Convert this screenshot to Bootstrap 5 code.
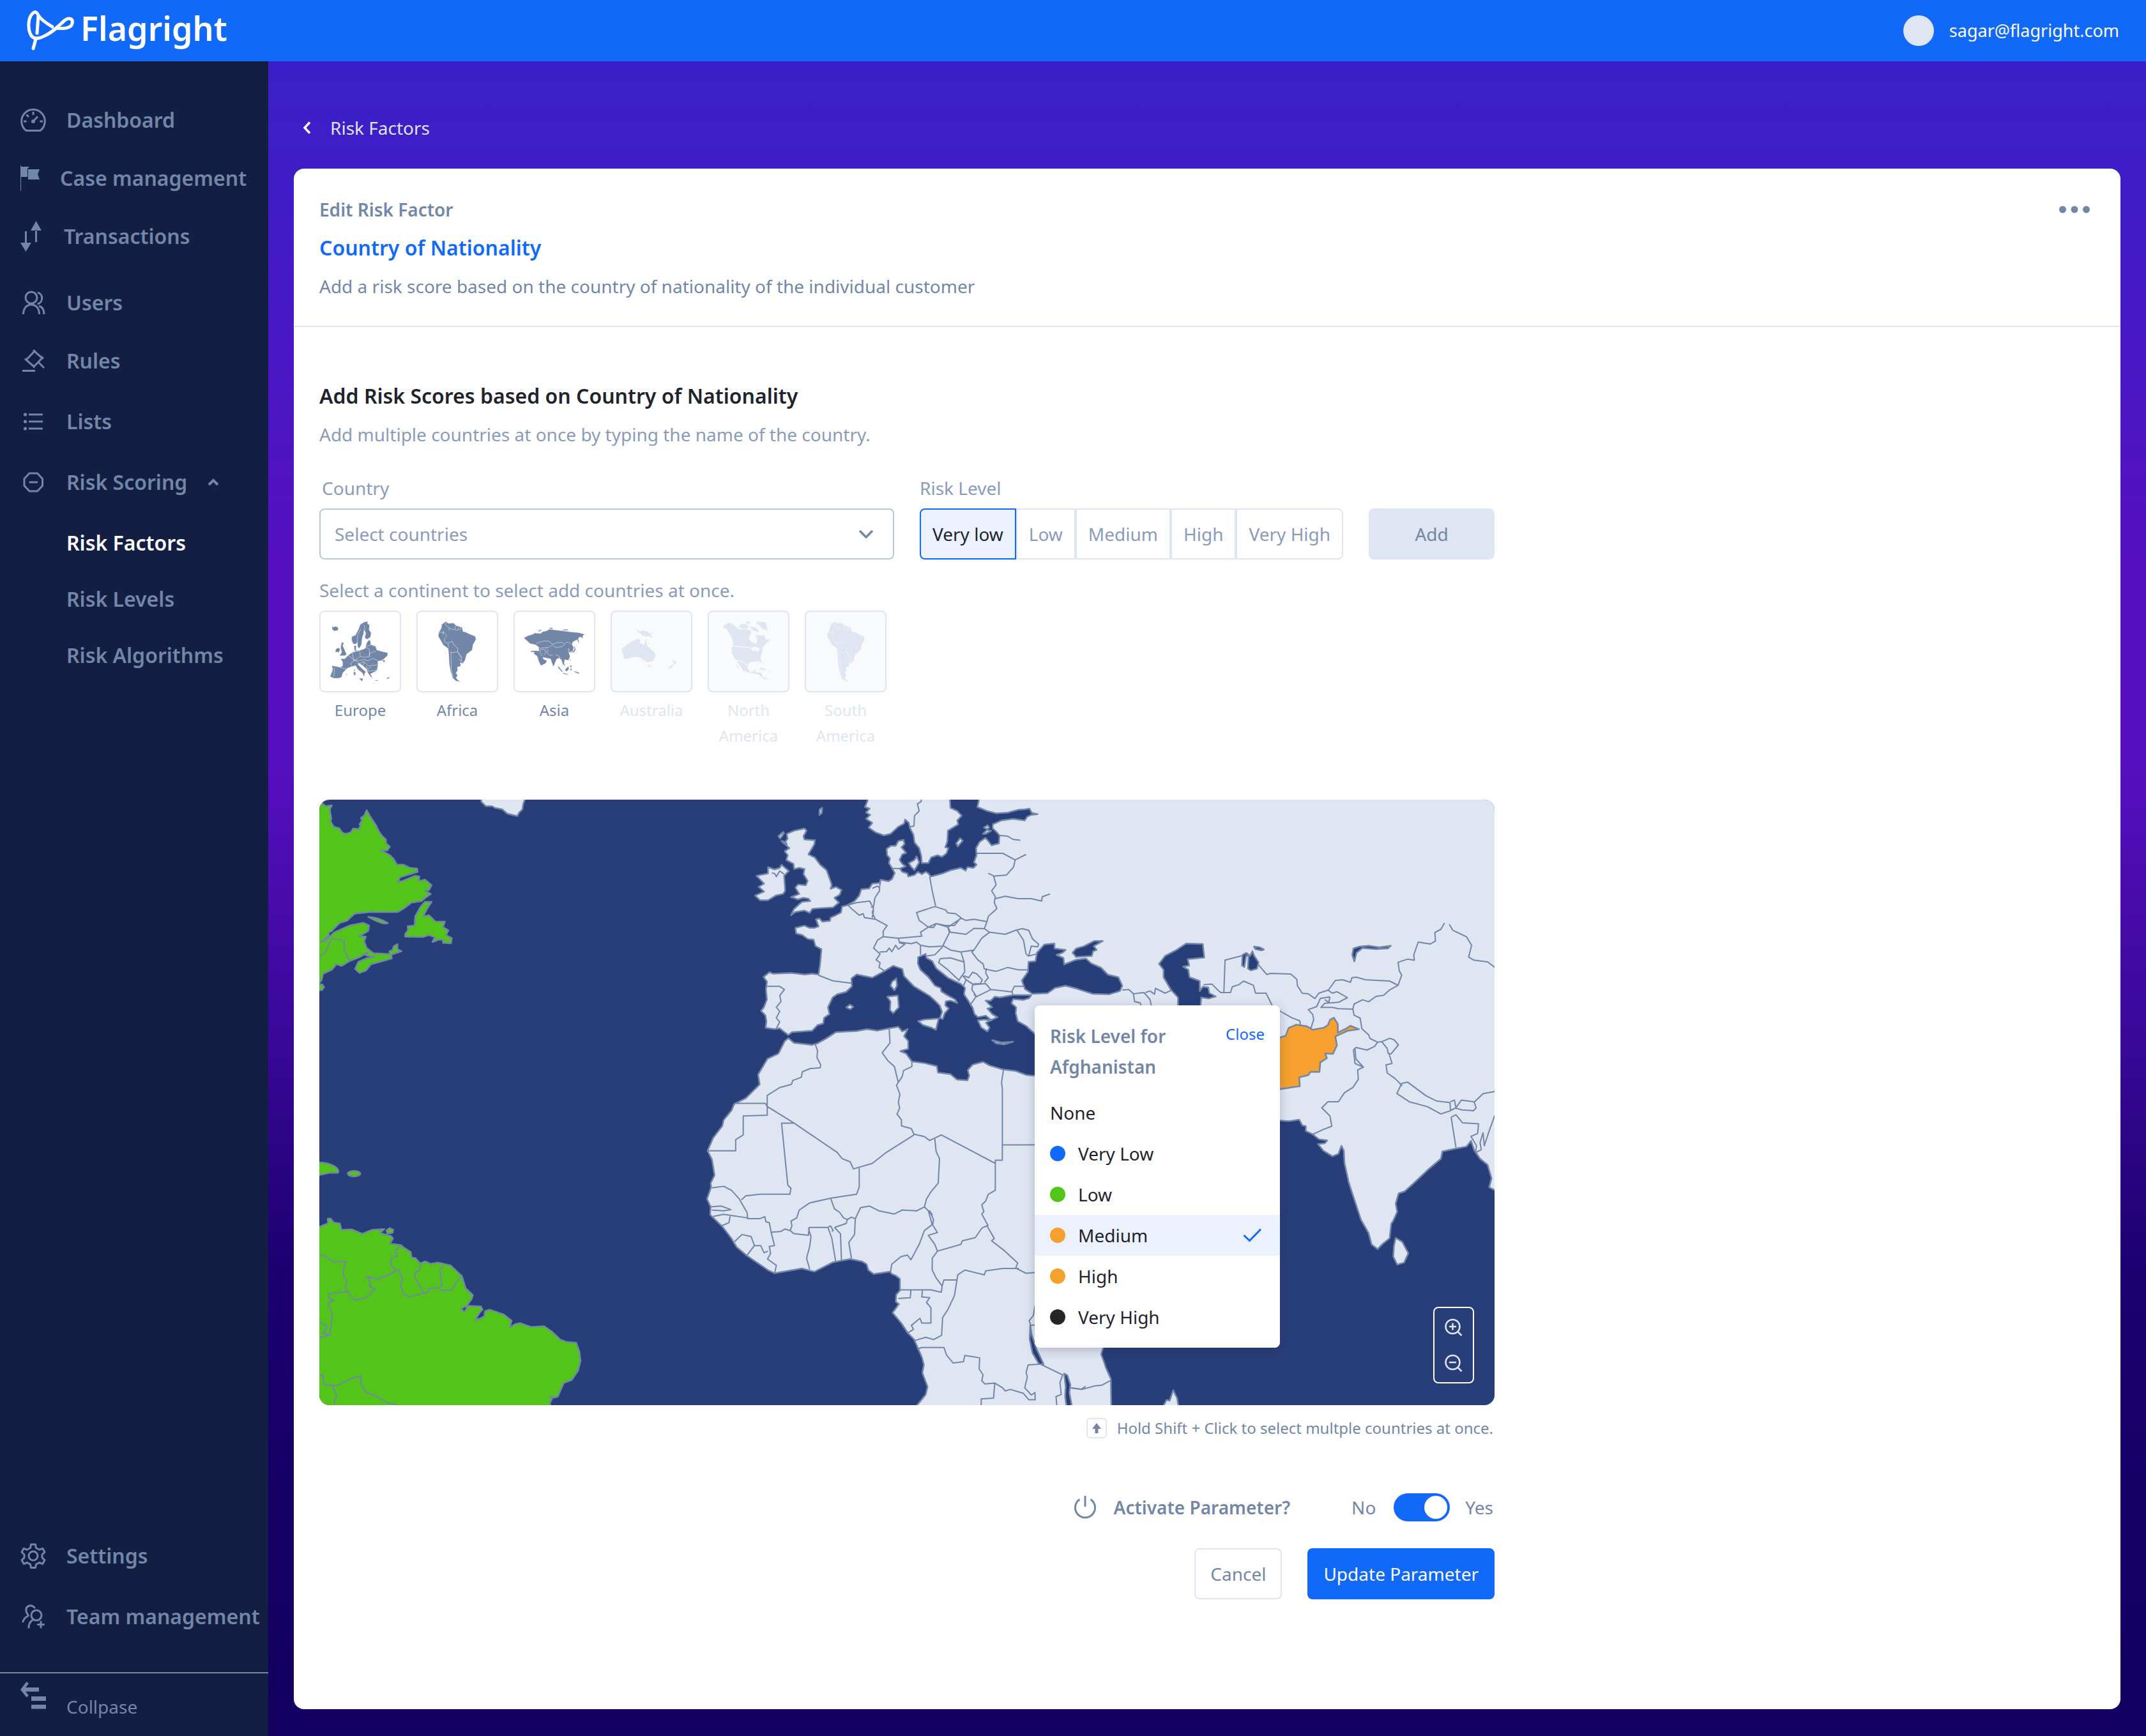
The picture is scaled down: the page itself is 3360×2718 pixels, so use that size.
<!DOCTYPE html>
<html lang="en">
<head>
<meta charset="utf-8">
<meta name="viewport" content="width=device-width, initial-scale=1">
<title>Flagright – Risk Factors</title>
<link href="https://cdn.jsdelivr.net/npm/bootstrap@5.3.0/dist/css/bootstrap.min.css" rel="stylesheet">
<style>
:root{--slate:#7286a8;--slate-soft:#8a9bba;--line:#dfe5f1;--brand:#1169f9;--ink:#1f232c;--navy:#131f42;--sea:#283e79}
body{font-family:"Noto Sans",sans-serif;font-size:28px;line-height:48px;color:var(--slate)}
a{text-decoration:none;color:inherit}
button{font-family:inherit}
.fw-semi{font-weight:600}
.topbar{height:96px;background:var(--brand);padding:0 42px}
.brand-name{font-size:52px;font-weight:600;line-height:80px;padding-bottom:8px;color:#fff}
.avatar{width:48px;height:48px;background:var(--line)}
.mail{font-size:27px}
.sidebar{width:420px;background:var(--navy);padding-top:68px;flex:none}
.side-item{display:flex;align-items:center;gap:32px;padding-left:32px;height:48px;font-size:32px;font-weight:600;color:var(--slate);white-space:nowrap}
.side-item svg,.collapse-row svg{flex:none}
.side-sub{padding-left:104px}
.side-item.current{color:#fff}
.gap-s{margin-bottom:40px}.gap-m{margin-bottom:43px}.gap-l{margin-bottom:47px}.gap-xl{margin-bottom:56px}
.collapse-row{display:flex;align-items:flex-start;gap:32px;width:100%;padding:12px 32px 22px;border:0;border-top:2px solid #76899b;background:none;color:var(--slate);text-align:left}
.collapse-row span{margin-top:16px}
.side-end{margin-bottom:63px}
.stage{padding:80px 40px 42px;background:linear-gradient(180deg,#3a20c8 0%,#421cc6 10%,#5510c0 30%,#550fbf 42%,#3a0899 58%,#1c0070 72%,#150066 85%,#130062 100%)}
.back{gap:30px;padding-left:14px;margin-bottom:40px;color:var(--line)}
.panel{border:0;border-radius:16px;background:#fff}
.panel-head{padding:40px 44px 38px 40px;border-bottom:2px solid var(--line)}
.stack{display:flex;flex-direction:column;gap:12px}
.stack>*{margin:0}
.t-large{font-size:32px;line-height:48px}
.blue{color:var(--brand)}
.dark{color:var(--ink)}
.panel-body{padding:84px 40px}
.work{max-width:1840px}
.soft{color:var(--slate-soft)}
.form-line{gap:40px;margin-top:36px}
.form-line label.cap,.form-line legend{display:block;margin:0 0 8px;font-size:28px;line-height:48px;color:var(--slate-soft);float:none}
.form-line label.cap{padding-left:4px}
.pick{height:80px;padding:0 64px 0 22px;border:2px solid #b9c5da;border-radius:8px;font-size:28px;color:var(--slate-soft);background-size:24px 16px;background-position:right 30px center;background-image:url("data:image/svg+xml,%3csvg xmlns='http://www.w3.org/2000/svg' viewBox='0 0 24 16'%3e%3cpath d='M2 3l10 10L22 3' fill='none' stroke='%237286a8' stroke-width='3.4'/%3e%3c/svg%3e")}
.country-col{flex:0 1 900px}
.seg{display:flex}
.seg label{height:80px;padding:0 18px;border:2px solid var(--line);line-height:76px;color:var(--slate-soft)}
.seg label:first-of-type{border-radius:8px 0 0 8px}
.seg label:last-of-type{border-radius:0 8px 8px 0}
.seg .btn-check:checked+label{border-color:var(--brand);background:#ebf1fd;color:var(--ink)}
.big-btn{height:80px;padding:0 23px;border:2px solid var(--line);border-radius:8px;font-size:28px;line-height:48px;color:var(--slate);background:#fff}
.big-btn.add{background:var(--line)}
.big-btn.go{border-color:var(--brand);background:var(--brand);color:#fff}
.tiles{gap:24px;margin-top:8px;margin-bottom:80px}
.tile{width:128px;padding:0;border:0;background:none;text-align:center;font-size:24px;line-height:40px;color:var(--slate)}
.tile svg{display:block;width:128px;height:128px;margin-bottom:8px;border:2px solid var(--line);border-radius:8px;fill:var(--slate);stroke:#fff;stroke-width:1.5}
.tile:disabled{color:var(--line)}
.tile:disabled svg{background:#f9fafc;fill:var(--line);stroke:#f9fafc}
.map-box{border-radius:16px;overflow:hidden;background:var(--sea)}
.map-box>svg{display:block;width:100%;height:auto}
.world path,.world ellipse{vector-effect:non-scaling-stroke}
.land{fill:#dfe5f1;stroke:#7286a8;stroke-width:2.5;stroke-linejoin:round}
.low{fill:#52c41a}
.water{fill:#283e79;stroke:#7286a8;stroke-width:2.5;stroke-linejoin:round}
.edge{fill:none;stroke:#7286a8;stroke-width:2;stroke-linejoin:round}
.popup{position:absolute;left:1120px;top:322px;width:384px;padding:24px 0 16px;border-radius:8px;background:#fff;box-shadow:0 4px 16px rgba(20,40,80,.25)}
.popup-head{padding:0 24px;margin-bottom:16px}
.popup-close{border:0;padding:0;background:none;font-size:24px;line-height:42px;color:var(--brand)}
.choice{display:flex;align-items:center;gap:20px;width:100%;height:64px;padding:0 24px;border:0;background:none;color:var(--ink);text-align:left}
.choice.on{background:#ebf1fd}
.dot{width:24px;height:24px;border-radius:50%;background:var(--brand)}
.dot-low{background:#52c41a}.dot-mid{background:#f6a02d}.dot-top{background:#262626}
.zoomer{position:absolute;right:32px;bottom:34px;width:64px;height:120px;padding:2px 0;border:2px solid #fff;border-radius:8px}
.zoomer button{padding:0;border:0;background:none;height:56px;line-height:0}
.hint{gap:16px;margin-top:20px;padding-right:2px;font-size:24px;line-height:32px}
.key{width:32px;height:32px;border:2px solid var(--line);border-radius:6px}
.switch-line{margin-top:84px;margin-bottom:40px;padding-right:2px}
.power{margin-right:27px}
.toggle.form-check-input{width:88px;height:44px;margin:0 24px 0 28px;border:0;border-radius:22px;background-color:var(--brand);background-size:44px 44px;background-position:right center;background-image:url("data:image/svg+xml,%3csvg xmlns='http://www.w3.org/2000/svg' viewBox='0 0 44 44'%3e%3ccircle cx='22' cy='22' r='18' fill='%23fff'/%3e%3c/svg%3e")}
.toggle.form-check-input:not(:checked){background-color:var(--slate);background-position:left center}
</style>
<script src="https://cdn.jsdelivr.net/npm/bootstrap@5.3.0/dist/js/bootstrap.bundle.min.js"></script>
</head>
<body>
<div class="d-flex flex-column min-vh-100">
<header class="topbar d-flex align-items-center justify-content-between">
  <a href="#" class="d-flex align-items-center" aria-label="Flagright home">
    <svg width="76" height="64" viewBox="0 0 76 64" fill="none" stroke="#fff" stroke-width="5" stroke-linecap="round" stroke-linejoin="round" class="me-2"><path d="M16 36L18 8Q23 16 40 26M18 8Q15 2 12 3C1 8 1 30 7 40Q13 47 24 42C40 36 50 24 58 17C66 10 73 13 71 21C69 29 58 29 47 28M14 45L10 60"/></svg>
    <span class="brand-name">Flagright</span>
  </a>
  <a href="#" class="d-flex align-items-center gap-4 text-white mail"><span class="avatar rounded-circle"></span>sagar@flagright.com</a>
</header>
<div class="d-flex flex-grow-1">
  <nav class="sidebar d-flex flex-column" aria-label="Main">
    <a class="side-item gap-m" href="#"><svg width="40" height="36" viewBox="0 0 40 36" fill="none" stroke="currentColor" stroke-width="3"><path d="M9 34.4A18.3 18.3 0 1 1 31 34.4Z"/><path d="M20 5v5M9.500 9.500l3.500 3.500M5 20h4.500M30.500 20H35M20 20l7-7.500"/><circle cx="20" cy="20" r="1.500"/></svg>Dashboard</a>
    <a class="side-item gap-m" href="#"><svg width="30" height="40" viewBox="0 0 30 40" fill="currentColor"><path d="M0 0h1v40H0zM1 2h13l-3 3v13H1zM13 6h17l-3 8 3 8H12V6z"/></svg>Case management</a>
    <a class="side-item gap-xl" href="#"><svg width="36" height="48" viewBox="0 0 36 48" fill="currentColor"><path d="M7 16h3v18H7zM0 34h17L8.500 48zM23 14h3v19h-3zM16 15h17L24.500 0z"/></svg>Transactions</a>
    <a class="side-item gap-m" href="#"><svg width="40" height="38" viewBox="0 0 40 38" fill="none" stroke="currentColor" stroke-width="3"><circle cx="17" cy="11" r="9"/><path d="M4.500 37c0-9 5-15 12.500-15s12.500 6 12.500 15M27 3c9 2 9 16-.5 18M29 24c6 2 8 7 8 13"/></svg>Users</a>
    <a class="side-item gap-l" href="#"><svg width="40" height="36" viewBox="0 0 40 36" fill="none" stroke="currentColor" stroke-width="3"><path d="M3 33.500h20M22 3L9 16.500 21 27 34 13.500zM20 1l4 3.500M32 11l4 3.500M7 14.500l4 4M19 24.500l3 4M28 20l9 9"/></svg>Rules</a>
    <a class="side-item gap-l" href="#"><svg width="40" height="28" viewBox="0 0 40 28" fill="currentColor"><circle cx="7.500" cy="3" r="2.600"/><circle cx="7.500" cy="14" r="2.600"/><circle cx="7.500" cy="25" r="2.600"/><path d="M13 1.500h22v3H13zM13 12.500h22v3H13zM13 23.500h22v3H13z"/></svg>Lists</a>
    <a class="side-item gap-l" href="#"><svg width="40" height="32" viewBox="0 0 40 32" fill="none" stroke="currentColor" stroke-width="3"><path d="M14 2h12.500l8 8.500v11l-8 8.500H14l-8-8.500v-11zM13.500 16h13.500"/></svg>Risk Scoring<svg width="18" height="12" viewBox="0 0 18 12" fill="none" stroke="currentColor" stroke-width="4"><path d="M2 10l7-7 7 7"/></svg></a>
    <a class="side-item side-sub current gap-s" href="#" aria-current="page">Risk Factors</a>
    <a class="side-item side-sub gap-s" href="#">Risk Levels</a>
    <a class="side-item side-sub" href="#">Risk Algorithms</a>
    <a class="side-item gap-l mt-auto" href="#"><svg width="40" height="40" viewBox="0 0 40 40" fill="none" stroke="currentColor" stroke-width="3" stroke-linejoin="round"><circle cx="20" cy="20" r="7"/><path d="M16.500 2h7l1 5.500 5 2.800 5.200-2L38 14l-4 4v5l4 3.600-3.300 5.900-5.200-2-5 2.900-1 5.100h-7l-1-5.100-5-2.900-5.200 2L2 26.600 6 23v-5l-4-4 3.300-5.700 5.200 2 5-2.800z"/></svg>Settings</a>
    <a class="side-item side-end" href="#"><svg width="40" height="40" viewBox="0 0 40 40" fill="none" stroke="currentColor" stroke-width="3" stroke-linecap="round"><circle cx="25" cy="18" r="8"/><path d="M22 6C17 0 8 3 9 11c0 4 4 6 3 8-4 2-7 5-8 9M20 25c-4 2-7 6-7 12M32 28v9M27.500 32.500h9"/></svg>Team management</a>
    <button type="button" class="collapse-row"><svg width="40" height="44" viewBox="0 0 40 44" fill="currentColor"><path d="M0 13.500L9.500 1l3.500 3-5 6h21v6.500H8l5 6-3.500 3zM17 24h23v7H17zM17 37h23v6.500H17z"/></svg><span>Collpase</span></button>
  </nav>
  <main class="stage flex-grow-1 d-flex flex-column">
    <a class="back d-flex align-items-center" href="#"><svg width="13" height="20" viewBox="0 0 13 20" fill="none" stroke="#fff" stroke-width="3.500"><path d="M11 1.500L3 10l8 8.500"/></svg>Risk Factors</a>
    <section class="panel card flex-grow-1">
      <header class="panel-head d-flex justify-content-between align-items-start">
        <div class="stack">
          <p class="fw-semi">Edit Risk Factor</p>
          <h1 class="t-large fw-semi blue">Country of Nationality</h1>
          <p>Add a risk score based on the country of nationality of the individual customer</p>
        </div>
        <button type="button" class="btn p-0 border-0" aria-label="More"><svg width="56" height="48" viewBox="0 0 56 48" fill="#7286a8"><circle cx="9.500" cy="24" r="5.500"/><circle cx="28" cy="24" r="5.500"/><circle cx="46.500" cy="24" r="5.500"/></svg></button>
      </header>
      <div class="panel-body">
      <div class="work">
        <div class="stack">
          <h2 class="t-large fw-semi dark">Add Risk Scores based on Country of Nationality</h2>
          <p class="soft">Add multiple countries at once by typing the name of the country.</p>
        </div>
        <form class="form-line d-flex align-items-end">
          <div class="country-col">
            <label class="cap" for="country">Country</label>
            <select class="form-select pick" id="country"><option>Select countries</option></select>
          </div>
          <fieldset>
            <legend>Risk Level</legend>
            <div class="seg">
              <input class="btn-check" type="radio" name="lvl" id="l1" checked><label for="l1">Very low</label>
              <input class="btn-check" type="radio" name="lvl" id="l2"><label for="l2">Low</label>
              <input class="btn-check" type="radio" name="lvl" id="l3"><label for="l3">Medium</label>
              <input class="btn-check" type="radio" name="lvl" id="l4"><label for="l4">High</label>
              <input class="btn-check" type="radio" name="lvl" id="l5"><label for="l5">Very High</label>
            </div>
          </fieldset>
          <button type="button" class="big-btn add flex-grow-1">Add</button>
        </form>
        <p class="soft mb-0 mt-4">Select a continent to select add countries at once.</p>
        <div class="tiles d-flex align-items-start">
          <button type="button" class="tile"><svg viewBox="36 36 372 372"><path d="M90 100l5 8 5-2 10-2 10 8-4 12-16 2-10-8zM258 80l-2 10 10 8-2 22 10 15-4 20-15 10-12-7 5-23-8-15-2 20-6 15-2 15-2 20-10 18-8-8-2-20-8 8-12-2-6-16V152l18-7 15-30 7-20 18-11zM136 178l10 4-6 13 8 17 10 23-8 7h-25l10-17-5-20 2-15zM108 210l12-6 8 8-6 14-18-2zM192 195h12l-2 20 10 3-16 4z"/><path d="M262 168l8 4 2 18 23 8 5 17 25 7 27 6-2 14-15 13-8 9-22 4 0 24-5 20-15 8-15 8 12 20-12-8-12-17-8-20-18-15-17-12-3 7 20 20 18 15-6 5-4 20-8-20-22-17-10-18-15 5-23 7-22 23-5 20-15 5H98l-18-8 12-30-4-22 42 8 10-8-2-20-10-12h22l15-16 20-14 30-8 30-10 5-20 5-10zM215 348h20l-3 16zM190 318h10v16h-8zM193 305h5v10h-4zM155 328h6v4h-6zM292 356h15v4h-15zM344 348l19-9-6 9-8 4zM325 260l15 4-7 11z"/><path fill="none" d="M225 115l-15 30-2 40M240 98l5 20M90 298l12 4-5 38M130 298l30 8M165 240l25 18 0 10M185 228l5 30 25 18M220 220l2 25-30 22-15 10 5 18M222 245l20 5 25-5-3-35-17-8M272 192l-22 4M265 245l0-15 30-10M190 262l25 3 25-5 20 5 20-10 25 8M215 280l25-10 20 20 40-5M240 270l-5 20M250 290l10 25 40-5M258 305l15-12"/></svg>Europe</button>
          <button type="button" class="tile"><svg viewBox="492 36 372 372"><g id="south-shape"><path d="M625 80l10 10 25-2 12 12 28 8 5 20 10 2 25 12 22 8 4 15-14 25-4 25-26 20-7 27-10 16-13-3 3 15-17 6 2 16-8 10 8 13-8 10 8 10 15 10-25-5-15-15-10-35-5-30-2-40-3-32-23-16-12-22-12-20 4-20 10-15 3-20z"/><path fill="none" d="M625 82l-2 15 17 15-2 12M640 112l25 8 7-20M668 122l15-2 2-12M690 122l5-14M592 130l25 4 12 14-14 17 5 13 15 6 2 18M615 125l-5 20M635 182l20-7 5 15 20 15v20l18 20 0 25M645 225l15 2 20-4 15 28M648 225l2 80 8 40M684 258l22 16"/></g></svg>Africa</button>
          <button type="button" class="tile"><svg viewBox="948 36 372 372"><path d="M990 158l20-10 25-8 5-5 30 2 8-8 22-5 10-7 20 3 35 4 45 6 35 3 32 8-10 8 2 12-15-8-8 8 6 26-12-20-18 9-5 12 8 15-5 22-18 2 6 18-4 14-8 5-13-4-3 18 7 14-14-10-6-20-11-9-12 6-9 22-5 14-8-20-6-18-20-4-16-4 4 10 16 6-8 14-22 10-10-22-8-24-16-10 4-7-16-1-2-7 38 0 0-18-18-10-22-5zM1058 125l14-7 2 4-12 8zM1110 110h14l4 6h-14zM1172 118h26v5h-22zM1200 208l7 10-6 8zM1212 222l10-2 6-8-2-14 4 0 4 16-6 10-10 4zM1152 290l22 26-4 3-20-22zM1175 322l22 6v4l-22-5zM1185 305l14-13 4 12-10 12-8-3zM1205 252l5 12-4 4zM1208 285l8 5v6h-8zM1228 314l22 6v8l-14-6-10-4zM1208 300l10 5-8 10z"/><path fill="none" d="M1046 195l8-14 30-8 22 0 20 14-14 14-18 2-25 4-20 0M1126 188l22-8 22 0 14 8-12 10-30 6-16-10M1184 182l14-4 14 10M1095 205l10 12-8 8 14 14 16 2M1045 205l20 15 10 22M1065 215l22-4 8 14-10 14M1030 220l14 20M1140 236l18 10 4 18M1040 262l20-8"/><path fill="#fff" d="M1046 196l9 3-2 9 8 9-6 2-6-8z"/></svg>Asia</button>
          <button type="button" class="tile" disabled><svg viewBox="54 36 372 372"><path d="M98 210l32-25 30-17 14-6 12 4 2 17 17 8 8-30 8 34 24 22 15 18-2 14-12 20-28 4-14-10-12-8-18-7-26 2-16 7-20 1zM220 285h20l-9 13zM166 121l12 2 6 5 16-6 25 8 12 12 12 18-20-8-26 0-8-10-16-8zM236 138l14-4-2 5-8 3zM336 256l14 10 9 8-9 12-6-8zM338 281l7 8-20 16-10-1z"/><path fill="none" d="M207 122v30"/></svg>Australia</button>
          <button type="button" class="tile" disabled><svg viewBox="510 36 372 372"><path d="M576 118l4-20 25-13 20 10 25 23 30-2 24 6 6 14-12 24 14 20 20 5 4-16-8-26 20 2 22 1 8 20 14-2 2 8-20 18-10 15-5 26-6 20 6 20 2 12-12-14-22 0-30 8-4 24 12 18 12-3 14-15-3 16 30 6 4 20 26 4-2 4-16 2-12-8-15-14-38-8-36-10-14-26-26-33-12-24v-30l8-14-6-20-8-20-20-30-22-4 8-4zM728 82l50 2 4 18 4 24-22-8-18-18zM650 100l26-10 22 12-10 18-34-10zM700 104l28 4 16 14v12l-30-12zM686 82h18v10h-18zM745 300l20 0 22 12-10 0-30-6zM792 315l24 3-20 3zM785 160l16 6-6 6zM634 268l18 36-8-4z"/><path fill="none" stroke-width="4" d="M622 197l82 6M630 262l34 6 34 26"/><path fill="#f9fafc" d="M706 206l22-6 22 10-14 14-10-10-6 8z"/></svg>North America</button>
          <button type="button" class="tile" disabled><svg viewBox="492 36 372 372"><use href="#south-shape" x="2" y="0"/></svg>South America</button>
        </div>

        <div class="position-relative">
          <div class="map-box">
          <svg class="world" viewBox="0 0 1840 948" role="img" aria-label="World map">
            <g transform="translate(-20 -12) scale(.39541 .61862)">
              <path class="land" d="M690 0L692 25 710 36 735 36 745 40 775 44 795 55 835 61 842 52 855 44 858 30 866 16V0Z"/>
              <path class="land low" d="M30 30L65 30 75 36 100 34 92 44 98 68 95 74 108 88 130 92 140 102 155 106 175 102 185 92 205 94 215 85 210 82 220 72 215 66 228 60 238 46 250 60 262 72 275 84 285 98 300 112 314 120 315 130 330 138 320 148 296 148 330 160 345 170 358 184 385 184 410 192 438 194 440 202 370 216 362 228 375 226 430 212 447 214 444 225 470 222 495 236 485 248 470 250 492 258 470 268 455 276 415 280 385 295 360 304 250 304 190 308 160 326 130 332 100 352 88 356 88 364 58 380 75 376 110 355 170 338 225 331 248 338 244 352 208 365 235 366 228 378 238 395 265 408 330 410 328 403 340 400 346 390 360 385 360 398 376 403 335 412 338 421 290 430 255 436 235 452 210 458 192 448 205 430 240 420 268 418 234 413 242 406 210 418 170 428 140 440 118 436 100 450 65 460 60 476 50 484 30 485Z"/>
              <path class="land low" d="M30 488L62 487 69 494 62 501 30 502ZM244 316Q290 318 322 332 300 337 244 316ZM468 278L495 278 475 298 462 315 485 312 510 328 548 328 540 342 562 350 552 362 575 370 572 383 540 382 540 374 522 374 498 380 508 368 485 362 460 367 390 366 390 360 402 350 400 340 428 338 430 315 450 292ZM30 938Q80 936 110 947 132 956 124 964L90 964 30 972ZM316 1110L328 1104 344 1108 340 1116 320 1118Z"/>
              <ellipse class="land low" cx="188" cy="966" rx="25" ry="7"/>
              <path class="land low" d="M30 1105L51 1100 85 1092 84 1080 96 1080 108 1090 132 1092 138 1108 180 1107 220 1118 260 1108 308 1106 292 1116 335 1124 342 1130 330 1143 375 1147 385 1153 412 1164 416 1178 432 1180 450 1193 470 1188 490 1194 520 1191 570 1198 615 1225 630 1256 658 1273 655 1282 635 1300 690 1302 697 1310 685 1318 668 1336 690 1332 704 1326 706 1314 725 1310 780 1322 812 1338 804 1356 825 1347 845 1344 890 1354 940 1352 970 1365 1005 1386 1030 1392 1068 1394 1080 1415 1085 1440 1075 1465 1050 1488 1018 1496 995 1530 980 1533 965 1530 972 1536 964 1545 970 1580 30 1580Z"/>
              <path class="water" d="M612 1308L628 1302 636 1304 625 1316Z"/>
              <path class="edge" d="M40 424L75 405 100 370 148 376 150 400 170 428M40 1176L70 1172 95 1185 110 1189 157 1188 145 1210 147 1225 160 1236 154 1252 160 1264 190 1286 225 1282 250 1274 258 1264 274 1258 252 1252 248 1232 235 1226 270 1230 285 1235 292 1228 320 1224 352 1212 332 1194 338 1178 360 1174 352 1160 375 1148M350 1210L368 1210 370 1220 380 1230 372 1250 385 1270 405 1278 465 1268 428 1228 430 1216 448 1210 452 1192M465 1268L482 1266 485 1256 525 1255 536 1248 528 1210 540 1198M525 1258L540 1262 575 1260 590 1244 612 1226M160 1264L90 1270 88 1280 108 1286 84 1294 102 1322 92 1374 65 1370 82 1352 51 1342 30 1342M30 1384L92 1374M40 1480L65 1474 68 1500 120 1502 180 1484 216 1478 216 1500 235 1520 280 1530 320 1546 360 1552M102 1502L120 1528 110 1538 112 1570"/>
            </g>
            <g transform="translate(580 -12) scale(.40816 .61862)">
              <path class="land" d="M682 0L682 22 672 38 690 42 676 52 692 58 676 68 700 78 686 90 712 102 745 110 770 106 800 88 822 80 826 70 840 78 845 92 858 108 862 128 880 142 888 162 890 180 915 180 925 166 950 160 968 164 985 155 992 142 980 140 988 125 990 98 1010 90 1030 82 1026 72 1043 60 1026 48 1000 40 996 0Z"/>
              <path class="land" d="M1120 -10L1103 38 1140 48 1175 54 1220 52 1260 45 1285 44 1303 42 1312 53 1334 56 1310 58 1295 62 1285 72 1240 68 1195 72 1162 82 1162 92 1175 100 1188 110 1186 130 1158 135 1145 124 1134 116 1112 126 1098 142 1100 160 1090 178 1100 184 1088 192 1065 190 1058 199 1040 192 1000 198 970 206 925 214 915 206 905 202 890 208 875 202 862 210 838 214 835 206 815 202 806 194 828 188 815 182 805 172 815 158 830 154 812 140 824 132 820 121 800 124 790 136 772 136 755 144 757 160 768 168 764 180 776 193 786 205 776 220 762 226 732 222 728 230 700 232 688 244 658 246 650 262 632 276 606 286 584 290 580 305 560 312 540 318 538 326 508 328 498 320 484 322 494 340 478 344 460 344 440 338 405 344 408 358 432 362 452 372 475 374 482 390 505 398 500 435 494 462 470 460 440 462 390 458 320 460 306 456 283 468 296 480 292 500 296 525 284 545 273 554 290 565 294 580 291 597 325 600 345 598 360 606 378 615 392 608 430 606 470 604 490 590 512 586 515 572 536 562 530 545 548 520 565 512 600 506 622 492 620 472 640 462 700 470 745 454 780 440 815 448 822 466 860 492 920 516 940 528 958 540 968 556 960 572 970 575 978 560 994 548 980 540 982 530 1000 528 1026 534 1018 525 990 515 965 505 962 496 940 490 915 468 885 450 875 435 876 418 905 410 908 420 930 428 945 446 990 470 1040 486 1056 496 1052 512 1070 530 1085 546 1092 562 1105 570 1135 566 1158 578 1128 576 1105 578 1118 596 1142 606 1150 596 1136 584 1160 576 1180 570 1160 562 1142 548 1160 545 1135 528 1155 528 1170 518 1190 520 1240 514 1310 514 1302 522 1280 526 1240 524 1234 535 1252 545 1250 560 1258 580 1290 592 1323 612 1360 620 1600 620 1600 -10Z"/>
              <path class="land" d="M440 92L448 98 436 112 440 120 480 122 478 132 455 158 480 166 500 184 525 198 545 235 540 245 560 240 582 248 575 260 555 268 572 280 550 292 500 294 470 296 460 306 440 300 405 304 388 312 400 296 430 278 462 276 455 270 435 268 415 272 388 266 420 258 405 242 415 234 445 236 452 225 436 208 440 195 420 192 400 195 398 182 370 172 376 160 364 150 382 142 362 130 375 118 372 106 400 98ZM345 192L352 184 380 200 362 212 366 250 358 258 330 262 300 274 270 274 250 262 285 252 264 240 285 232 256 212 300 206 300 190 325 196ZM792 472L795 490 785 502 770 490 776 480ZM757 518L798 515 802 545 780 560 768 552 770 530ZM876 580L900 576 955 573 944 602 925 596 895 590ZM600 545L615 538 627 544 615 550ZM1160 628L1195 634 1240 632 1205 639 1175 636ZM840 180L862 172 870 163 880 178 862 198 850 190ZM1022 130L1037 117 1047 123 1028 138ZM1124 106L1140 96 1156 98 1135 106ZM1128 90L1142 84 1150 90 1140 94ZM340 112L358 101 362 104 347 118ZM352 124L366 126 372 132 360 130ZM498 44L508 40 506 54 497 58Z"/>
              <path class="land" d="M378 623L400 635 470 640 490 636 520 625 560 608 640 605 680 600 720 604 765 598 800 594 815 606 836 600 822 618 838 630 838 650 808 656 830 662 852 682 900 686 948 694 952 710 1000 714 1025 728 1065 730 1072 718 1066 704 1085 690 1125 683 1150 692 1200 702 1250 706 1290 716 1323 718 1400 720 1600 700 1600 1600 860 1600 872 1552 905 1525 912 1505 892 1470 898 1450 890 1430 870 1400 860 1385 835 1368 812 1345 778 1318 802 1296 790 1290 792 1272 806 1262 806 1232 790 1224 775 1220 768 1214 705 1220 685 1210 678 1195 660 1188 615 1182 550 1190 478 1214 430 1206 325 1218 300 1210 220 1174 180 1152 160 1130 125 1100 78 1070 80 1050 66 1030 82 1000 80 990 95 970 85 930 68 908 90 875 125 845 130 830 160 806 170 790 215 775 268 740 262 715 298 675 340 662 365 630Z"/>
              <path class="edge" d="M482 640L490 655 488 672 502 690 500 698 462 700 432 708 428 722 395 730 390 740 345 748 297 768 297 818 205 820 205 868 176 880 176 908 68 908M170 788L290 788 297 796 400 838 565 912 585 928 615 936 628 954 700 940 750 914 860 868M400 838L352 838 376 995 388 1003 384 1018 270 1018 215 1022 198 1032M765 600L768 635 738 660 760 680 785 695 800 735 815 720 820 705 852 695 852 684M800 735L793 742 806 765 800 785 805 800 795 815 812 830 812 845 850 852 860 866 900 872 920 882 965 868 1172 940M1203 704L1196 735 1199 752 1199 932 1172 932 1172 1008 1145 1018 1135 1035 1120 1045 1128 1062 1120 1068 1145 1098M1199 893H1330M940 878L945 910 958 928 953 990 925 1012 908 1030 900 1050 870 1060 815 1058 785 1068 725 1060 690 1048 655 1052 635 1080 620 1076 605 1082 590 1078 575 1064 555 1055 540 1028 640 1018 650 1000 650 952M900 1050L930 1070 920 1060 935 1082 932 1096 950 1115 915 1122 940 1145 950 1162 1040 1145 1045 1136 1095 1128 1120 1104 1140 1098 1168 1130 1158 1136 1205 1160 1258 1192 1250 1205 1290 1218 1330 1216M950 1162L930 1180 930 1210 945 1230 968 1250 975 1235 1025 1235 1028 1222 1055 1210 1130 1222 1135 1212 1200 1206 1262 1206M770 1214L775 1195 810 1176 835 1172 848 1184 880 1145 900 1110 930 1095 916 1062M635 1080L632 1120 610 1140 620 1180M540 1028L460 1040 420 1058 410 1078 388 1086 392 1098 385 1110 400 1118 455 1122 458 1102 530 1102 545 1130 560 1190M530 1102L540 1098 550 1110 545 1112M555 1102L578 1118 582 1186M555 1102L600 1092 605 1080M455 1104L465 1125 460 1150 448 1180 460 1208M385 1110L365 1106 350 1112 312 1114 325 1148 305 1150 310 1168 298 1182 332 1198 326 1217M312 1114L305 1090 292 1088 288 1075 268 1080 222 1080 220 1065 200 1042 190 1030 160 1008 130 998 85 1002M80 1050L120 1048 158 1057 130 1060 85 1058M90 1074L130 1069 222 1078M155 1074L150 1090 122 1098M172 1138L200 1120 235 1125 248 1148 220 1172M248 1148L272 1148 285 1166 300 1162M806 1260L925 1260 965 1266 968 1250M848 1260L846 1280 800 1282M892 1262L890 1278 920 1280 908 1292 925 1305 925 1344 890 1344 883 1332 850 1350 858 1360 838 1368M1025 1235L1020 1255 1015 1275 990 1310 970 1330 966 1375 935 1386 905 1380 865 1388M872 1410L890 1406 975 1406 985 1425 1010 1445 1050 1442 1055 1426 1112 1432 1110 1460 1125 1475 1120 1490 1132 1498 1170 1496 1165 1534 1118 1536 1118 1570M1170 1496L1200 1508 1210 1516 1230 1512 1280 1522 1300 1538 1325 1538 1324 1520 1310 1526 1285 1508 1295 1480 1290 1470 1298 1450 1345 1448 1420 1472 1430 1475 1420 1495 1425 1525 1405 1530 1410 1570M1460 1508L1500 1512 1520 1504 1560 1508M1324 1300L1318 1325 1302 1338 1308 1350 1330 1348"/>
              <path class="water" d="M1306 1350L1312 1375 1330 1410 1357 1448 1340 1448 1315 1420 1304 1385ZM1436 1472L1448 1476 1460 1500 1456 1520 1470 1570 1448 1570 1440 1530 1442 1505Z"/>
              <path class="edge" d="M885 10L888 24 873 30 880 48 862 60 860 86 845 88M732 226L728 240 728 250 710 268 705 290 695 292M725 242L720 238 700 244M606 286L640 280 690 276 705 295 700 305 712 322 692 320 670 318 665 308 650 312 625 298ZM705 300L700 318M712 322L757 338 742 352 742 366 720 375 705 395 720 404 730 410 715 425 730 432 726 444 745 452M742 366L800 370 805 382 825 385 800 398 790 388 775 404 765 395 755 404 728 405M800 370L890 365 885 355 915 342 935 343 945 333 990 342 996 356 970 390 920 392 885 388 870 380 850 384 805 380M870 305L940 290 980 298 990 306 1020 308 1040 318 1015 338 980 338 945 333 915 342 880 325ZM920 214L930 250 943 288M1036 318L1060 325 1090 322 1140 328 1145 315 1178 295 1168 280 1172 265 1158 250 1175 235 1165 212 1145 206M1040 320L990 342 1000 355 1060 360 1090 345 1130 346 1140 328M970 388L1000 400 1040 405 1090 400 1120 370 1150 355 1130 346M1150 355L1210 360 1250 350 1275 346 1300 350 1315 372 1338 385 1335 392 1310 390 1300 415 1330 410M1255 350L1280 375 1290 410 1300 416M1090 400L1082 405 1105 425 1125 435 1130 448 1175 454 1220 444 1260 450 1300 450M1040 405L1052 430 1055 455 1030 478M960 422L1000 420 1050 430M960 422L955 432 990 450 1035 478M885 388L885 412M910 415L940 412 970 392M1052 465L1070 470 1085 456 1100 460 1122 475 1115 485 1085 486 1060 475 1046 464M1085 488L1135 485 1155 500 1100 518 1082 500ZM1138 446L1135 458 1145 470 1130 482M1155 500L1210 504 1235 506 1245 492 1282 492M1060 475L1050 490M1090 512L1098 518 1075 540M1235 504L1240 514M296 492L345 492 363 500 345 515 350 530 332 545 345 555 332 572 345 582 332 598M494 464L550 478 622 484M1188 110L1220 112 1240 120 1268 122M1100 155L1200 155 1248 172 1290 158M1248 172L1242 190 1215 210 1165 213M1172 270L1210 264 1260 270 1310 270 1350 276 1352 265 1382 258M776 193L805 194M315 205L325 206 332 214 345 200 362 208"/>
            </g>
            <path fill="#dfe5f1" d="M1200 0h640v948h-640z"/>
            <g transform="translate(1100 288) scale(.47194 .63776)">
              <path class="edge" d="M160 992L200 996 240 988 265 986 292 975"/>
              <path class="water" d="M800 336L856 336 885 338 920 334 930 348 942 350 942 362 965 370 985 382 1013 385 1005 392 982 394 1000 410 1030 424 1050 418 1060 398 1068 410 1070 440 1085 490 1125 580 1150 612 1160 640 1180 652 1195 640 1220 625 1225 590 1232 582 1245 560 1240 540 1250 515 1270 510 1300 490 1350 455 1390 430 1395 412 1440 405 1475 400 1490 386 1500 408 1520 430 1545 445 1558 478 1550 500 1590 515 1590 1100 298 1100 295 970 278 942 273 930 263 910 270 893 260 860Z"/>
              <path class="land" d="M1240 624L1262 634 1282 662 1268 685 1245 690 1232 670 1234 645ZM460 1050L480 1022 490 1024 502 998 515 1018 522 1050Z"/>
              <path class="edge" d="M1105 160L1108 185 1133 205 1114 212 1116 235 1098 255 1070 268 1050 290 1015 290 995 305 1022 325 1028 350 1000 358 965 370M1260 245L1280 242 1340 275 1375 288 1420 292 1422 312 1390 320 1345 302 1285 290 1244 270ZM1422 290L1435 286 1440 305 1420 312M1440 305L1458 286 1500 290 1507 305 1498 312 1460 310 1440 306M1502 290L1530 270 1568 265 1590 268M1424 328L1440 322 1462 342 1515 344 1512 368 1490 375 1508 398 1505 415 1524 408 1520 390 1530 366 1534 398 1550 362 1568 325 1590 320M1424 328L1440 402"/>
            </g>
            <g transform="translate(1100 -12) scale(.47194 .33333)">
              <path class="water" d="M20 845L22 798 45 795 50 755 75 716 108 712 108 735 145 742 135 755 115 765 138 780 140 810 180 788 212 782 230 805 262 825 285 858 320 870 333 910 325 935 290 950 235 948 185 925 145 910 110 920 85 945 35 948 10 925 0 885ZM168 755L180 735 205 725 240 700 268 700 238 724 248 742 236 748 232 770 212 772 180 775ZM513 742L545 712 600 714 605 778 550 785 555 815 535 820 552 835 556 870 590 888 590 935 600 915 618 918 622 945 643 960 620 970 595 965 592 1020 518 1020 518 965 495 930 470 870 470 835 455 808 475 770ZM732 765L745 756 757 770 765 748 770 768 785 800 780 830 760 838 750 830 752 772 744 768 738 822 730 815ZM770 726L790 730 803 740 795 744 775 738ZM1103 796L1096 765 1100 735 1120 726 1150 722 1185 730 1224 722 1215 734 1175 738 1130 733 1110 755Z"/>
              <path class="edge" d="M333 930L355 928 370 948 374 985 392 990 400 1020M370 948L405 942 425 975 432 1020M410 942L425 935 440 950 443 922 475 945 495 932M602 905L630 902 650 930 660 942 692 942 698 915 720 905 735 888 768 908 775 945 810 945 830 1002 860 1032 895 1060 922 1075 925 1099M732 768L674 790 670 942M785 812L812 857 825 852 892 855 912 880 914 910 930 945 950 948 972 970 985 945 1017 930 1040 885 1065 882 1090 894 1095 872 1110 870 1140 882 1220 888 1248 908 1220 930 1200 955 1175 960 1150 985 1130 976 1102 996 1098 1020 1050 1018 1030 1012 992 1012 1005 992 1050 988 1080 966 1045 938 1030 945 1017 932M1022 962L1018 988 1005 975M1022 962L990 970 978 1008 950 1022 965 1045 968 1070 958 1112M1098 1020L1102 1048 1122 1062 1128 1112 1150 1140 1155 1158 1180 1175 1170 1195 1145 1212 1108 1200 1100 1212 1105 1275 1132 1292M1248 908L1260 860 1252 840 1248 800 1280 785 1302 790 1300 765 1315 705 1355 714 1372 700 1370 660 1390 645 1402 615M1418 622L1430 650 1475 680 1492 720 1482 775 1500 790 1545 798 1580 836M1180 1175L1195 1172 1220 1157 1235 1164 1249 1188 1225 1230 1215 1228 1212 1205 1195 1175M1218 1230L1228 1275 1208 1282 1212 1320 1238 1346 1262 1380"/>
              <path class="land" style="fill:#f6a02d" d="M840 1160L875 1145 885 1108 910 1093 945 1100 965 1117 1000 1108 1015 1095 1022 1070 1035 1060 1048 1090 1048 1130 1075 1112 1090 1098 1118 1114 1080 1122 1040 1148 1045 1190 1032 1230 1006 1228 1012 1250 990 1270 987 1315 958 1314 950 1330 920 1340 922 1382 850 1397Z"/>
            </g>
          </svg>
          </div>
          <div class="popup" role="dialog" aria-label="Risk level">
            <div class="popup-head d-flex justify-content-between align-items-start"><div class="fw-semi">Risk Level for<br>Afghanistan</div><button type="button" class="popup-close">Close</button></div>
            <button type="button" class="choice">None</button>
            <button type="button" class="choice"><span class="dot"></span>Very Low</button>
            <button type="button" class="choice"><span class="dot dot-low"></span>Low</button>
            <button type="button" class="choice on"><span class="dot dot-mid"></span>Medium<svg class="ms-auto me-1" width="30" height="24" viewBox="0 0 30 24" fill="none" stroke="#1169f9" stroke-width="3"><path d="M1.500 12l9 8.500L28 2.500"/></svg></button>
            <button type="button" class="choice"><span class="dot dot-mid"></span>High</button>
            <button type="button" class="choice"><span class="dot dot-top"></span>Very High</button>
          </div>
          <div class="zoomer d-flex flex-column align-items-center">
            <button type="button" aria-label="Zoom in"><svg width="28" height="28" viewBox="0 0 28 28" fill="none" stroke="#dfe5f1" stroke-width="2.500"><circle cx="12.500" cy="13" r="11"/><path d="M20.500 21l6 6M7 13h11M12.500 7.500v11"/></svg></button>
            <button type="button" aria-label="Zoom out"><svg width="28" height="28" viewBox="0 0 28 28" fill="none" stroke="#dfe5f1" stroke-width="2.500"><circle cx="12.500" cy="13" r="11"/><path d="M20.500 21l6 6M7 13h11"/></svg></button>
          </div>
        </div>

        <div class="hint d-flex justify-content-end align-items-center"><span class="key d-flex align-items-center justify-content-center"><svg width="14" height="16" viewBox="0 0 14 16" fill="#7286a8"><path d="M7 0l7 9H9.500v7h-5V9H0z"/></svg></span>Hold Shift + Click to select multple countries at once.</div>
        <div class="switch-line d-flex justify-content-end align-items-center">
          <svg width="36" height="36" viewBox="0 0 36 36" fill="none" stroke="#7286a8" stroke-width="3" class="power"><path d="M18 0v17M9.500 5.500a15.500 15.500 0 1 0 17 0"/></svg>
          <label for="active" class="fw-semi me-5">Activate Parameter?</label>
          <span class="ms-5">No</span>
          <input class="form-check-input toggle" type="checkbox" role="switch" id="active" checked>
          <span>Yes</span>
        </div>
        <div class="d-flex justify-content-end form-end"><button type="button" class="big-btn me-4">Cancel</button><button type="button" class="big-btn go ms-3">Update Parameter</button></div>
      </div>
      </div>
    </section>
  </main>
</div>
</div>
</body>
</html>
